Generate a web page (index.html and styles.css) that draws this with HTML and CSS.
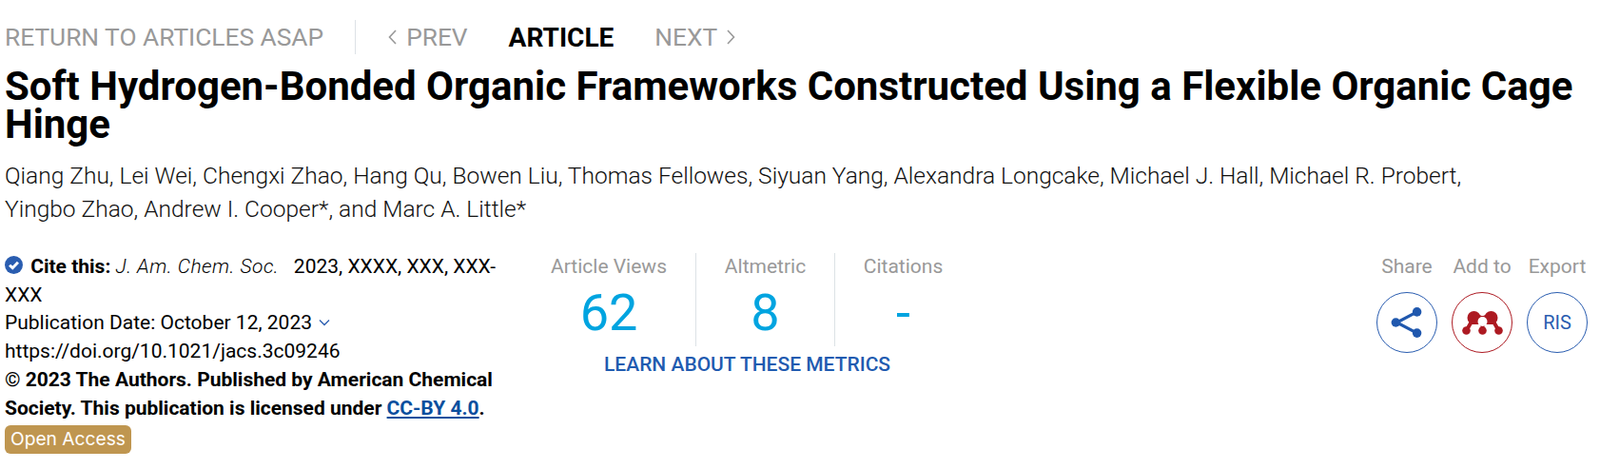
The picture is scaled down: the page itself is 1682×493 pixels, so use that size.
FILE: index.html
```html
<!DOCTYPE html>
<html lang="en">
<head>
  <meta charset="UTF-8" />
  <title>Soft Hydrogen-Bonded Organic Frameworks</title>
  <link rel="stylesheet" href="styles.css">
</head>
<body>
  <nav class="article-nav">
    <a class="nav-return">RETURN TO ARTICLES ASAP</a>
    <div class="nav-pager">
      <a class="nav-link">
        <svg class="nav-chevron" viewBox="0 0 9 16"><path d="M8 1 1.500 8 8 15" /></svg>
        PREV
      </a>
      <a class="nav-current">ARTICLE</a>
      <a class="nav-link">
        NEXT
        <svg class="nav-chevron" viewBox="0 0 9 16"><path d="M1 1 7.500 8 1 15" /></svg>
      </a>
    </div>
  </nav>

  <h1 class="article-title">Soft Hydrogen-Bonded Organic Frameworks Constructed Using a Flexible Organic Cage Hinge</h1>

  <p class="authors">Qiang Zhu, Lei Wei, Chengxi Zhao, Hang Qu, Bowen Liu, Thomas Fellowes, Siyuan Yang, Alexandra Longcake, Michael J. Hall, Michael R. Probert, Yingbo Zhao, Andrew I. Cooper*, and Marc A. Little*</p>

  <div class="meta-row">
    <div class="cite">
      <div class="cite-line">
        <svg class="cite-check" viewBox="0 0 18 18">
          <circle cx="9" cy="9" r="9" />
          <path d="M4.800 9.200 7.800 12 13.200 6.400" />
        </svg>
        <strong>Cite this:</strong> <em class="cite-journal">J. Am. Chem. Soc.</em>&nbsp;&nbsp; 2023, XXXX, XXX, XXX-XXX
      </div>
      <div>
        Publication Date: October 12, 2023
        <svg class="date-chevron" viewBox="0 0 12 8"><path d="M1 1.500 6 6.500 11 1.500" /></svg>
      </div>
      <div>https://doi.org/10.1021/jacs.3c09246</div>
      <div class="license"><span class="license-mark">©</span> 2023 The Authors. Published by American Chemical Society. This publication is licensed under <a class="license-link">CC-BY 4.0</a>.</div>
      <span class="open-access">Open Access</span>
    </div>

    <div class="metrics">
      <div class="metric-row">
        <div class="metric metric-views">
          <div class="metric-label">Article Views</div>
          <div class="metric-value">62</div>
        </div>
        <div class="metric metric-altmetric">
          <div class="metric-label">Altmetric</div>
          <div class="metric-value">8</div>
        </div>
        <div class="metric metric-citations">
          <div class="metric-label">Citations</div>
          <div class="metric-value">-</div>
        </div>
      </div>
      <a class="metrics-link">LEARN ABOUT THESE METRICS</a>
    </div>

    <div class="actions">
      <div class="action">
        <div class="action-label">Share</div>
        <div class="action-circle circle-blue">
          <svg class="share-icon" viewBox="0 0 34 30">
            <path d="M27 4.500 7 15 27 25.500" />
            <circle cx="27" cy="4.500" r="4.500" />
            <circle cx="6" cy="15" r="4.500" />
            <circle cx="27" cy="25.500" r="4.500" />
          </svg>
        </div>
      </div>
      <div class="action">
        <div class="action-label">Add to</div>
        <div class="action-circle circle-red">
          <svg class="mendeley-icon" viewBox="0 0 43 25">
            <path class="mendeley-legs" d="M4.500 20.500 10 11M38.500 20.500 33 11M21.500 20.500V12" />
            <circle cx="12.500" cy="7" r="7" />
            <circle cx="30.500" cy="7" r="7" />
            <path d="M12.500 2.500C17 2.500 19 5 21.500 5S26 2.500 30.500 2.500L34 14H9Z" />
            <circle class="mendeley-hole" cx="21.500" cy="11" r="5" />
            <circle cx="4.500" cy="20.500" r="4.300" />
            <circle cx="21.500" cy="20.500" r="4.300" />
            <circle cx="38.500" cy="20.500" r="4.300" />
          </svg>
        </div>
      </div>
      <div class="action">
        <div class="action-label">Export</div>
        <div class="action-circle circle-blue action-text">RIS</div>
      </div>
    </div>
  </div>
</body>
</html>
```

FILE: styles.css
```css
body {
  margin: 0;
  padding: 21px 13px 0 5px;
  background: #fff;
  color: #000;
  font-family: Roboto, sans-serif;
  font-size: 21px;
}

.article-nav {
  display: flex;
  align-items: center;
  height: 36px;
  font-size: 26.300px;
  color: #999;
}

.nav-return {
  padding-right: 33px;
  height: 36px;
  line-height: 36px;
  border-right: 1px solid #dde2e6;
}

.nav-pager {
  display: flex;
  align-items: center;
  gap: 43px;
  margin-left: 34px;
}

.nav-link {
  display: flex;
  align-items: center;
  gap: 10px;
}

.nav-chevron {
  width: 9px;
  height: 16px;
  fill: none;
  stroke: #999;
  stroke-width: 1.600;
}

.nav-current {
  font-size: 28px;
  font-weight: 700;
  color: #000;
}

.article-title {
  margin: 0;
  padding-top: 14px;
  font-size: 42px;
  line-height: 40px;
  font-weight: 700;
}

.authors {
  margin: 16px 0 0;
  max-width: 1580px;
  font-size: 24.500px;
  line-height: 35px;
  font-weight: 300;
  color: #111;
}

.meta-row {
  display: flex;
  margin-top: 27px;
}

.cite {
  flex: none;
  width: 525px;
  line-height: 30px;
}

.cite-line {
  padding-top: 1px;
  margin-bottom: -1px;
}

.cite-journal {
  font-weight: 300;
  letter-spacing: 0.470px;
}

.cite-check {
  width: 19px;
  height: 19px;
  vertical-align: -1px;
  margin-right: 3px;
}

.cite-check circle {
  fill: #2a5db0;
}

.cite-check path {
  fill: none;
  stroke: #fff;
  stroke-width: 2.800;
}

.date-chevron {
  width: 12px;
  height: 8px;
  margin-left: 2px;
  vertical-align: 3px;
  fill: none;
  stroke: #2a5db0;
  stroke-width: 1.300;
}

.license {
  font-weight: 700;
}

.license-mark {
  font-weight: 400;
}

.license-link {
  color: #0a4f9e;
  text-decoration: underline;
}

.open-access {
  display: block;
  width: fit-content;
  margin-top: 3px;
  padding: 0 6px;
  height: 30px;
  line-height: 29px;
  border-radius: 6px;
  background: #bf9650;
  color: #fff;
  font-family: Inter, sans-serif;
  font-size: 19.200px;
}

.metrics {
  flex: none;
  margin-left: 18px;
  padding-top: 2px;
  display: flex;
  flex-direction: column;
}

.metric-row {
  display: flex;
  height: 98px;
}

.metric {
  text-align: center;
  border-right: 1px solid #dde2e6;
}

.metric-views {
  width: 182px;
  padding-left: 1px;
}

.metric-altmetric {
  width: 145px;
}

.metric-citations {
  width: 143px;
  border-right: none;
}

.metric-label {
  padding-top: 1px;
  line-height: 26px;
  color: #999;
}

.metric-value {
  font-size: 54px;
  line-height: 60px;
  margin-top: 6px;
  color: #00a4e0;
}

.metrics-link {
  margin-top: 6px;
  padding-left: 87px;
  font-weight: 500;
  line-height: 26px;
  color: #1f5bb0;
}

.actions {
  display: flex;
  gap: 15px;
  margin-left: auto;
  padding-top: 2px;
}

.action {
  display: flex;
  flex-direction: column;
  align-items: center;
  width: 64px;
}

.action-label {
  padding-top: 1px;
  line-height: 26px;
  color: #999;
  white-space: nowrap;
}

.action-circle {
  display: flex;
  align-items: center;
  justify-content: center;
  box-sizing: border-box;
  width: 64px;
  height: 64px;
  margin-top: 14px;
  border: 1px solid;
  border-radius: 50%;
}

.circle-blue {
  border-color: #2a5db0;
}

.circle-red {
  border-color: #ad1a22;
}

.action-text {
  color: #2a5db0;
  font-size: 20px;
}

.share-icon {
  width: 36px;
  height: 32px;
  fill: #2058ae;
  stroke: none;
}

.share-icon path {
  fill: none;
  stroke: #2058ae;
  stroke-width: 3;
}

.mendeley-icon {
  width: 43px;
  height: 25px;
  fill: #ad1a22;
}

.mendeley-legs {
  fill: none;
  stroke: #ad1a22;
  stroke-width: 4;
}

.mendeley-hole {
  fill: #fff;
}
```
